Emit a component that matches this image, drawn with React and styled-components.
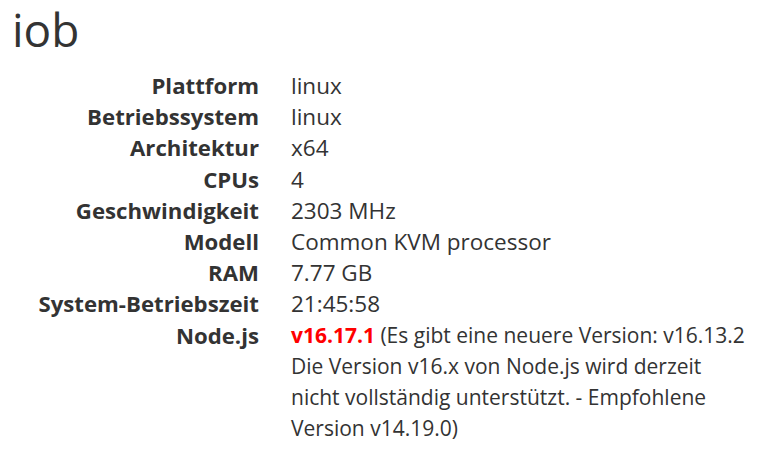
import React from "react";
import styled, { createGlobalStyle } from "styled-components";

const Global = createGlobalStyle`
  html, body { margin: 0; padding: 0; background: #fff; }
  body { font-family: "Open Sans", "Noto Sans", sans-serif; color: #333; }
`;

const Page = styled.div`
  padding: 0 12px;
`;

const Title = styled.h1`
  margin: -3px 0 0;
  font-size: 46px;
  font-weight: 400;
  line-height: 64px;
  color: #333;
`;

const Table = styled.div`
  display: grid;
  grid-template-columns: 247px 458px;
  column-gap: 32px;
  margin-top: 9px;
  font-size: 22.5px;
  line-height: 31.2px;
`;

const Label = styled.div`
  text-align: right;
  font-weight: 700;
  font-size: 22.2px;
`;

const Value = styled.div`
  font-size: ${(p) => (p.$note ? "21px" : "inherit")};
`;

const Version = styled.span`
  color: #f00;
  font-weight: 700;
`;

const rows = [
  ["Plattform", "linux"],
  ["Betriebssystem", "linux"],
  ["Architektur", "x64"],
  ["CPUs", "4"],
  ["Geschwindigkeit", "2303 MHz"],
  ["Modell", "Common KVM processor"],
  ["RAM", "7.77 GB"],
  ["System-Betriebszeit", "21:45:58"],
];

export default function App() {
  return (
    <Page>
      <Global />
      <Title>iob</Title>
      <Table>
        {rows.map(([l, v]) => (
          <React.Fragment key={l}>
            <Label>{l}</Label>
            <Value>{v}</Value>
          </React.Fragment>
        ))}
        <Label>Node.js</Label>
        <Value $note>
          <Version>v16.17.1</Version> (Es gibt eine neuere Version: v16.13.2
          Die Version v16.x von Node.js wird derzeit nicht vollständig
          unterstützt. - Empfohlene Version v14.19.0)
        </Value>
      </Table>
    </Page>
  );
}
